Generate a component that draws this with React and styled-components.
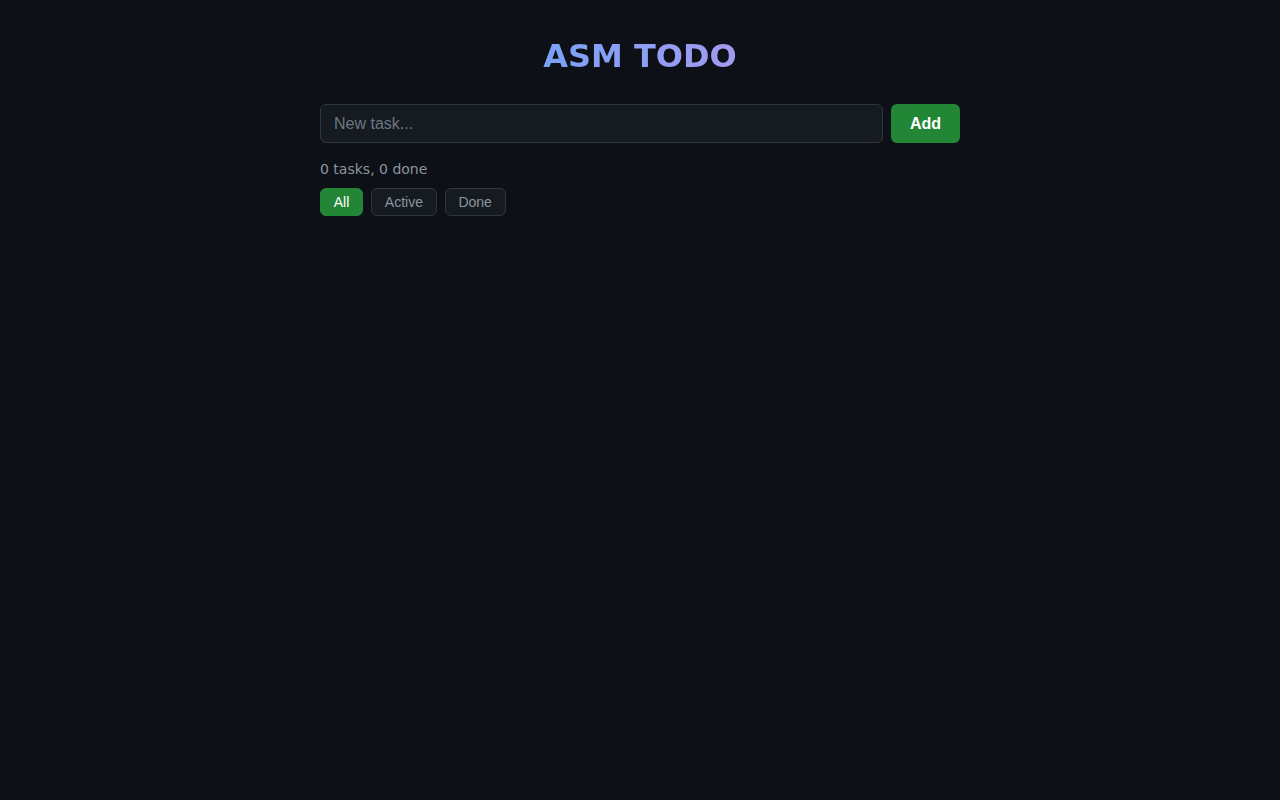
import React, { useState } from 'react';
import styled, { createGlobalStyle } from 'styled-components';

const GlobalStyle = createGlobalStyle`
  html, body {
    margin: 0;
    padding: 0;
    background: #0d1117;
    color: #c9d1d9;
    font-family: "DejaVu Sans", sans-serif;
    min-height: 100%;
  }
`;

const Container = styled.div`
  max-width: 640px;
  margin: 0 auto;
  padding: 38px 0 40px;
  display: flex;
  flex-direction: column;
`;

const Title = styled.h1`
  margin: 0 0 29px;
  font-family: "DejaVu Sans", sans-serif;
  font-size: 32px;
  font-weight: 700;
  line-height: 37px;
  text-align: center;
  align-self: center;
  background: linear-gradient(90deg, #7aa2f7, #a29bf0);
  -webkit-background-clip: text;
  background-clip: text;
  color: transparent;
`;

const InputRow = styled.form`
  display: flex;
  gap: 8px;
`;

const TaskInput = styled.input`
  flex: 1;
  height: 39px;
  box-sizing: border-box;
  padding: 0 13px;
  background: #161b22;
  border: 1px solid #30363d;
  border-radius: 6px;
  color: #c9d1d9;
  font-family: "Liberation Sans", Arial, sans-serif;
  font-size: 16px;
  outline: none;
  &::placeholder {
    color: #6e7681;
  }
`;

const AddButton = styled.button`
  width: 69px;
  height: 39px;
  border: none;
  border-radius: 6px;
  background: #238636;
  color: #ffffff;
  font-family: "Liberation Sans", Arial, sans-serif;
  font-size: 16px;
  font-weight: 700;
  cursor: pointer;
`;

const Stats = styled.div`
  margin-top: 17px;
  font-size: 14px;
  line-height: 18px;
  color: #8b949e;
`;

const Filters = styled.div`
  display: flex;
  gap: 8px;
  margin-top: 10px;
`;

const FilterButton = styled.button`
  height: 28px;
  box-sizing: border-box;
  padding: 0 12.75px;
  border-radius: 6px;
  border: 1px solid ${(p) => (p.$active ? '#238636' : '#30363d')};
  background: ${(p) => (p.$active ? '#238636' : '#161b22')};
  color: ${(p) => (p.$active ? '#ffffff' : '#8b949e')};
  font-family: "Liberation Sans", Arial, sans-serif;
  font-size: 14px;
  cursor: pointer;
`;

const filters = ['All', 'Active', 'Done'];

const App = () => {
  const [tasks, setTasks] = useState([]);
  const [text, setText] = useState('');
  const [filter, setFilter] = useState('All');

  const addTask = (e) => {
    e.preventDefault();
    if (!text.trim()) return;
    setTasks([...tasks, { id: Date.now(), text: text.trim(), done: false }]);
    setText('');
  };

  const doneCount = tasks.filter((t) => t.done).length;

  return (
    <>
      <GlobalStyle />
      <Container>
        <Title>ASM TODO</Title>
        <InputRow onSubmit={addTask}>
          <TaskInput placeholder="New task..." value={text} onChange={(e) => setText(e.target.value)} />
          <AddButton type="submit">Add</AddButton>
        </InputRow>
        <Stats>
          {tasks.length} tasks, {doneCount} done
        </Stats>
        <Filters>
          {filters.map((f) => (
            <FilterButton key={f} $active={filter === f} onClick={() => setFilter(f)}>
              {f}
            </FilterButton>
          ))}
        </Filters>
      </Container>
    </>
  );
};

export default App;
